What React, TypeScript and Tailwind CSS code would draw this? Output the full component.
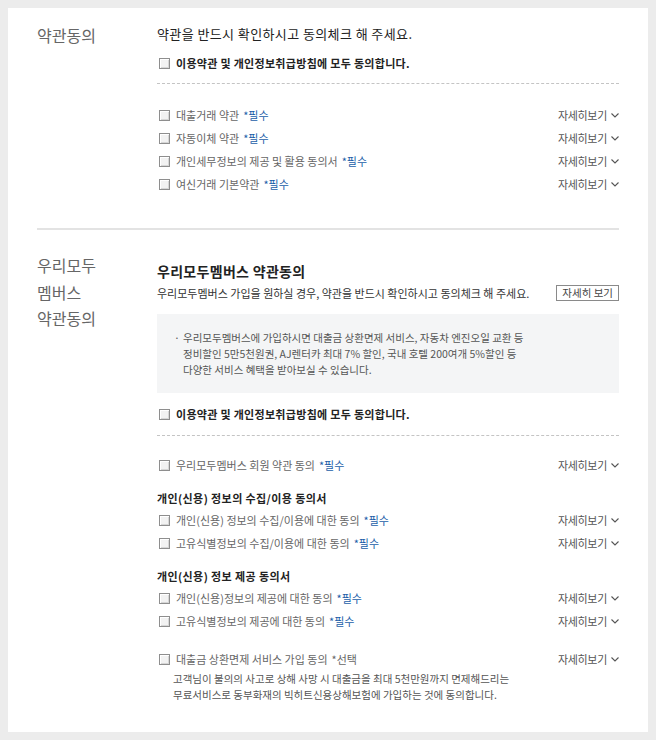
import React from 'react';

const font = { fontFamily: '"Noto Sans CJK KR", "Noto Sans", sans-serif' };

interface TermItem {
  label: string;
  tag?: 'required' | 'optional';
}

function CheckBox() {
  return (
    <span className="inline-block w-[11px] h-[11px] shrink-0 border border-[#8e8e8e] bg-[#f2f2f2] shadow-[inset_1px_1px_0_#ffffff,inset_-1px_-1px_0_#d6d6d6]" />
  );
}

function MoreLink() {
  return (
    <span className="flex items-center gap-[4px] text-[11px] text-[#555] tracking-[-0.3px]">
      자세히보기
      <svg width="8" height="5" viewBox="0 0 8 5" fill="none">
        <path d="M0.5 0.5 L4 4 L7.5 0.5" stroke="#555" strokeWidth="1.1" />
      </svg>
    </span>
  );
}

function TermRow({ item }: { item: TermItem }) {
  return (
    <div className="flex items-center justify-between h-[23px]">
      <label className="flex items-center gap-[6px] pl-[2px] text-[11px] text-[#666]">
        <CheckBox />
        <span>
          {item.label}
          {item.tag === 'required' && <span className="ml-[4px] text-[#1b5ea8]">*필수</span>}
          {item.tag === 'optional' && <span className="ml-[4px] text-[#666]">*선택</span>}
        </span>
      </label>
      <MoreLink />
    </div>
  );
}

function AgreeAll() {
  return (
    <label className="flex items-center gap-[6px] h-[20px] pl-[2px] text-[11px] font-bold text-[#222] tracking-[0.3px]">
      <CheckBox />
      이용약관 및 개인정보취급방침에 모두 동의합니다.
    </label>
  );
}

const loanTerms: TermItem[] = [
  { label: '대출거래 약관', tag: 'required' },
  { label: '자동이체 약관', tag: 'required' },
  { label: '개인세무정보의 제공 및 활용 동의서', tag: 'required' },
  { label: '여신거래 기본약관', tag: 'required' },
];

const collectTerms: TermItem[] = [
  { label: '개인(신용) 정보의 수집/이용에 대한 동의', tag: 'required' },
  { label: '고유식별정보의 수집/이용에 대한 동의', tag: 'required' },
];

const provideTerms: TermItem[] = [
  { label: '개인(신용)정보의 제공에 대한 동의', tag: 'required' },
  { label: '고유식별정보의 제공에 대한 동의', tag: 'required' },
];

export default function App() {
  return (
    <div className="min-h-screen bg-[#ececec] p-[8px] w-[656px] h-[740px]" style={font}>
      <div className="bg-white h-[724px] px-[29px] pt-[14px] pb-[27px]">
        {/* 약관동의 */}
        <div className="flex border-b-2 border-[#e3e3e3] pb-[32px]">
          <div className="w-[120px] shrink-0 text-[16px] text-[#666] leading-[26px]">약관동의</div>
          <div className="flex-1">
            <div className="h-[24px] flex items-center text-[13px] text-[#222] tracking-[0.4px]">
              약관을 반드시 확인하시고 동의체크 해 주세요.
            </div>
            <div className="mt-[7px]">
              <AgreeAll />
            </div>
            <div className="mt-[10px] border-t border-dashed border-[#c4c4c4]" />
            <div className="mt-[20px]">
              {loanTerms.map((t) => (
                <TermRow key={t.label} item={t} />
              ))}
            </div>
          </div>
        </div>

        {/* 우리모두 멤버스 약관동의 */}
        <div className="flex">
          <div className="w-[120px] shrink-0 pt-[22px] text-[16px] text-[#666] leading-[26.5px]">
            <div>우리모두</div>
            <div>멤버스</div>
            <div>약관동의</div>
          </div>
          <div className="flex-1 pt-[31px]">
            <div className="h-[20px] flex items-center text-[14px] font-bold text-[#222] tracking-[0.3px]">
              우리모두멤버스 약관동의
            </div>
            <div className="mt-[2px] h-[20px] flex items-center justify-between">
              <span className="text-[11px] text-[#333]">
                우리모두멤버스 가입을 원하실 경우, 약관을 반드시 확인하시고 동의체크 해 주세요.
              </span>
              <button className="h-[16px] px-[5px] border border-[#8a8a8a] bg-white text-[10.5px] text-[#444] leading-none">
                자세히 보기
              </button>
            </div>
            <div className="mt-[11px] bg-[#f4f5f6] pt-[16px] pb-[15px] pl-[17px] pr-[10px] text-[10.5px] text-[#555] leading-[16px]">
              <div className="flex">
                <span className="w-[9px] shrink-0">·</span>
                <div>
                  우리모두멤버스에 가입하시면 대출금 상환면제 서비스, 자동차 엔진오일 교환 등
                  <br />
                  정비할인 5만5천원권, AJ렌터카 최대 7% 할인, 국내 호텔 200여개 5%할인 등
                  <br />
                  다양한 서비스 혜택을 받아보실 수 있습니다.
                </div>
              </div>
            </div>
            <div className="mt-[11px]">
              <AgreeAll />
            </div>
            <div className="mt-[11px] border-t border-dashed border-[#c4c4c4]" />
            <div className="mt-[18px]">
              <TermRow item={{ label: '우리모두멤버스 회원 약관 동의', tag: 'required' }} />
            </div>
            <div className="mt-[10px] h-[22px] flex items-center text-[11px] font-bold text-[#222] tracking-[0.4px]">
              개인(신용) 정보의 수집/이용 동의서
            </div>
            {collectTerms.map((t) => (
              <TermRow key={t.label} item={t} />
            ))}
            <div className="mt-[10px] h-[22px] flex items-center text-[11px] font-bold text-[#222] tracking-[0.4px]">
              개인(신용) 정보 제공 동의서
            </div>
            {provideTerms.map((t) => (
              <TermRow key={t.label} item={t} />
            ))}
            <div className="mt-[15px]">
              <TermRow item={{ label: '대출금 상환면제 서비스 가입 동의', tag: 'optional' }} />
            </div>
            <div className="pl-[16px] text-[10.5px] text-[#555] leading-[16px]">
              고객님이 불의의 사고로 상해 사망 시 대출금을 최대 5천만원까지 면제해드리는
              <br />
              무료서비스로 동부화재의 빅히트신용상해보험에 가입하는 것에 동의합니다.
            </div>
          </div>
        </div>
      </div>
    </div>
  );
}
